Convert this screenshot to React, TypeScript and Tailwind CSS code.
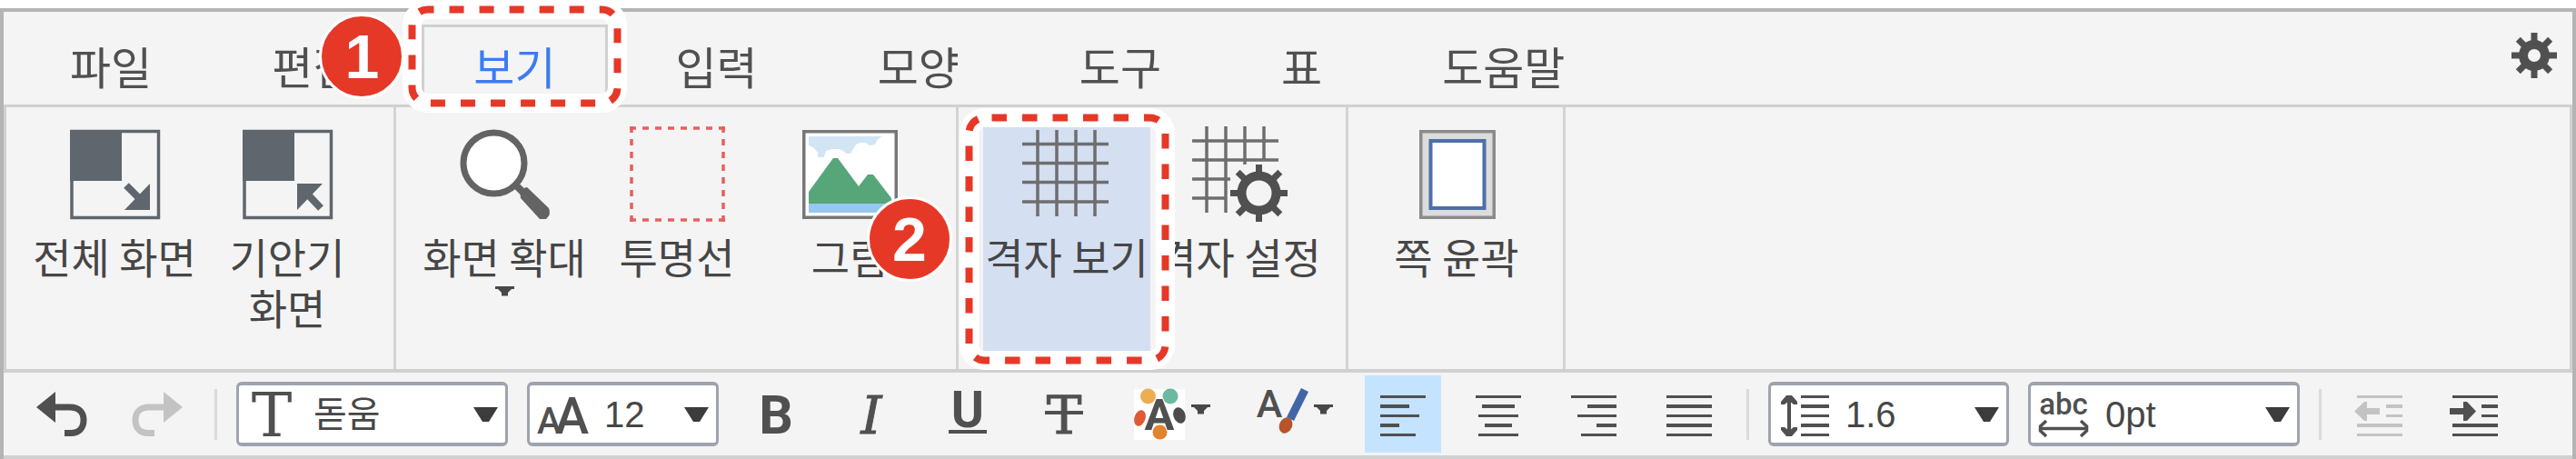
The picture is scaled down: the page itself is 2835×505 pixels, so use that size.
import type { ReactNode } from "react";

const INK = "#505050";

function Badge({ n, className }: { n: number; className: string }) {
  return (
    <span
      className={`pointer-events-none absolute z-30 flex size-[94px] items-center justify-center rounded-full border-[3px] border-white bg-[#e63827] font-['Liberation_Sans',sans-serif] text-[68px] leading-none font-bold text-white ${className}`}
    >
      {n}
    </span>
  );
}

function Callout({
  width,
  height,
  dash,
  offset,
  className,
}: {
  width: number;
  height: number;
  dash: string;
  offset: number;
  className: string;
}) {
  const box = { x: 10.5, y: 10.5, width: width - 21, height: height - 21, rx: 17, fill: "none" };
  return (
    <svg
      width={width}
      height={height}
      aria-hidden="true"
      className={`pointer-events-none absolute z-20 max-w-none ${className}`}
    >
      <rect {...box} stroke="#fff" strokeWidth="21" />
      <rect {...box} stroke="#e63827" strokeWidth="8" strokeDasharray={dash} strokeDashoffset={offset} />
    </svg>
  );
}

function Tab({ label, active, children }: { label: string; active?: boolean; children?: ReactNode }) {
  return (
    <div className="relative shrink-0">
      <button
        type="button"
        role="tab"
        aria-selected={!!active}
        className={`h-[88px] border-x-[3px] border-t-[3px] px-[54px] pb-[2px] text-[49px] leading-[56px] ${
          active ? "border-[#d0d0d0] text-[#3d7bf2]" : "border-transparent text-[#505050]"
        }`}
      >
        {label}
      </button>
      {children}
    </div>
  );
}

function Gear({ cx, cy, ring, thick, tip, diag }: { cx: number; cy: number; ring: number; thick: number; tip: number; diag: number }) {
  return (
    <g transform={`translate(${cx} ${cy})`} stroke={INK} fill="none">
      <circle r={ring} strokeWidth={thick} />
      {[0, 90, 180, 270].map((a) => (
        <g key={a} transform={`rotate(${a})`} strokeWidth="7">
          <path d={`M${ring} 0H${tip}`} />
          <path d={`M${ring} 0H${diag}`} transform="rotate(45)" />
        </g>
      ))}
    </g>
  );
}

function BigIcon({ children }: { children: ReactNode }) {
  return (
    <svg width="105" height="105" viewBox="0 0 105 105" aria-hidden="true" className="shrink-0">
      {children}
    </svg>
  );
}

function ScreenIcon({ inward }: { inward?: boolean }) {
  return (
    <BigIcon>
      <rect x="5" y="5.5" width="95.5" height="95" fill="none" stroke="#5f666d" strokeWidth="3.5" />
      <rect x="3" y="4" width="57" height="56" fill="#5f666d" />
      {inward ? (
        <>
          <path d="M63 63H91L63 92Z" fill="#5f666d" />
          <path d="M72 72L89 90" stroke="#5f666d" strokeWidth="8" />
        </>
      ) : (
        <>
          <path d="M91 63V92H63Z" fill="#5f666d" />
          <path d="M65 65L82 82" stroke="#5f666d" strokeWidth="8" />
        </>
      )}
    </BigIcon>
  );
}

function ZoomIcon() {
  return (
    <BigIcon>
      <path d="M62 62L78 78" stroke="#636363" strokeWidth="8" />
      <path d="M69 69L77 67L101 90Q104 97 98 102H91L70 79Z" fill="#636363" />
      <circle cx="40.5" cy="40.5" r="33.5" fill="#fff" stroke="#636363" strokeWidth="7" />
    </BigIcon>
  );
}

function GuideIcon() {
  return (
    <BigIcon>
      <path
        d="M0 2H105M0 103H105M2 0V105M103 0V105"
        stroke="#e85f5f"
        strokeWidth="3.5"
        strokeDasharray="7 7"
        fill="none"
      />
    </BigIcon>
  );
}

function PictureIcon() {
  return (
    <BigIcon>
      <rect x="1.75" y="5.75" width="101.5" height="94.5" fill="#fff" stroke="#777" strokeWidth="3.5" />
      <path
        d="M7 11H88L83 14L80 20L74 21L70 18H64L59 20L56 25L53 30H49L45 27L40 25H33L26 27L24 34H17V29L13 24L7 21Z"
        fill="#d2e5f5"
      />
      <path d="M7 72L34 35H39L62 66L72 53H78L98 79V86H7Z" fill="#57a679" />
      <rect x="7" y="85" width="91" height="10" fill="#97c7ee" />
    </BigIcon>
  );
}

function GridIcon() {
  return (
    <BigIcon>
      <path
        d="M3 19.5H98M3 40.5H98M3 61.5H98M3 83H98M20 4V99M41 4V99M62 4V99M83 4V99"
        stroke="#6e6e6e"
        strokeWidth="3.5"
      />
    </BigIcon>
  );
}

function GridSettingsIcon() {
  return (
    <BigIcon>
      <path
        d="M0 16H95M0 37H95M0 58H42M0 79H38M16 0V95M37 0V95M58 0V42M79 0V37"
        stroke="#6e6e6e"
        strokeWidth="3.5"
      />
      <Gear cx={73.5} cy={73.5} ring={19} thick={10} tip={31.5} diag={33} />
    </BigIcon>
  );
}

function PageOutlineIcon() {
  return (
    <BigIcon>
      <rect x="12.75" y="5.75" width="80.5" height="94.5" fill="#dcdcdc" stroke="#8b8b8b" strokeWidth="3.5" />
      <rect x="23.5" y="16" width="59" height="74" fill="#fff" stroke="#4d70aa" strokeWidth="4" />
    </BigIcon>
  );
}

function SmallCaret() {
  return (
    <svg width="21" height="11" viewBox="0 0 21 11" aria-hidden="true" className="shrink-0">
      <path d="M0 0H21V3H18L14 7V10.5H7V7L3 3H0Z" fill="#484848" />
    </svg>
  );
}

function RibbonGroup({ children }: { children: ReactNode }) {
  return <div className="flex shrink-0 border-r-[3px] border-[#d4d4d4] pr-[22px] pl-6">{children}</div>;
}

function RibbonItem({
  icon,
  label,
  pressed,
  caret,
  children,
}: {
  icon: ReactNode;
  label: string;
  pressed?: boolean;
  caret?: boolean;
  children?: ReactNode;
}) {
  return (
    <div className="relative flex w-[190px] shrink-0 px-[3px] pt-[15px] pb-[14px]">
      <button
        type="button"
        aria-pressed={pressed}
        className={`flex w-full flex-col items-center pt-[6px] ${pressed ? "bg-[#d5dff2]" : ""}`}
      >
        {icon}
        <span className="mt-[9px] text-[46px] leading-[56px] break-keep text-[#464646]">{label}</span>
        {caret && (
          <span className="mt-[6px]">
            <SmallCaret />
          </span>
        )}
      </button>
      {children}
    </div>
  );
}

function SmallIcon({ children }: { children: ReactNode }) {
  return (
    <svg width="56" height="56" viewBox="0 0 56 56" aria-hidden="true" className="shrink-0 overflow-visible">
      {children}
    </svg>
  );
}

function Tool({ label, pressed, disabled, children }: { label: string; pressed?: boolean; disabled?: boolean; children: ReactNode }) {
  return (
    <button
      type="button"
      aria-label={label}
      aria-pressed={pressed}
      disabled={disabled}
      className={`flex h-[85px] w-[84px] shrink-0 items-center justify-center ${pressed ? "bg-[#c4e3ff]" : ""}`}
    >
      <SmallIcon>{children}</SmallIcon>
    </button>
  );
}

function MenuTool({ label, children }: { label: string; children: ReactNode }) {
  return (
    <button
      type="button"
      aria-label={label}
      className="flex h-[85px] w-[114px] shrink-0 items-center gap-[7px] pl-4"
    >
      <SmallIcon>{children}</SmallIcon>
      <span className="pb-[11px]">
        <SmallCaret />
      </span>
    </button>
  );
}

function Divider() {
  return <span className="h-14 w-[3px] shrink-0 bg-[#dadada]" />;
}

function Picker({ label, value, width, children }: { label: string; value: string; width: string; children: ReactNode }) {
  return (
    <label
      className={`relative flex h-[71px] shrink-0 items-center rounded-[6px] border-x-[3px] border-y-4 border-[#9fa3ae] bg-white pl-2 ${width}`}
    >
      <SmallIcon>{children}</SmallIcon>
      <select
        aria-label={label}
        defaultValue={value}
        className="h-full min-w-0 flex-1 appearance-none bg-transparent pl-[18px] font-['Liberation_Sans','Noto_Sans_CJK_KR',sans-serif] text-[40px] leading-[60px] text-[#464646] outline-none"
      >
        <option>{value}</option>
      </select>
      <svg
        width="27"
        height="16"
        viewBox="0 0 27 16"
        aria-hidden="true"
        className="pointer-events-none absolute right-2 top-1/2 -translate-y-1/2"
      >
        <path d="M0 0H27L17 16H10Z" fill="#3c3c3c" />
      </svg>
    </label>
  );
}

const rowY = [7, 17, 28, 38, 49];
const rowH = [3, 4, 3, 4, 3];

function Rows({ widths, align }: { widths: number[]; align: "left" | "center" | "right" }) {
  return (
    <g fill={INK}>
      {widths.map((w, i) => (
        <rect
          key={i}
          x={align === "left" ? 3 : align === "right" ? 53 - w : 28 - w / 2}
          y={rowY[i]}
          width={w}
          height={rowH[i]}
        />
      ))}
    </g>
  );
}

function IndentRows({ color }: { color: string }) {
  return (
    <g fill={color}>
      {rowY.map((y, i) => {
        const short = i === 1 || i === 2;
        return <rect key={y} x={short ? 36 : 4} y={y} width={short ? 18 : 50} height={rowH[i]} />;
      })}
    </g>
  );
}

export default function App() {
  return (
    <div className="overflow-hidden bg-white pt-[9px] font-['Noto_Sans_CJK_KR',sans-serif]">
      <div className="border-x-4 border-t-4 border-[#b4b4b4] bg-[#f4f4f4]">
        <div className="flex items-start justify-between border-b-[3px] border-[#d0d0d0] pt-[14px] pr-[17px] pl-4">
          <div role="tablist" className="flex gap-[18px]">
            <Tab label="파일" />
            <Tab label="편집" />
            <Tab label="보기" active>
              <Callout width={247} height={124} dash="16 17.04" offset={9} className="-top-[27px] -left-[21px]" />
              <Badge n={1} className="-top-[12px] -left-[113px]" />
            </Tab>
            <Tab label="입력" />
            <Tab label="모양" />
            <Tab label="도구" />
            <Tab label="표" />
            <Tab label="도움말" />
          </div>
          <button type="button" aria-label="설정" className="mt-[9px] shrink-0">
            <svg width="50" height="50" viewBox="0 0 50 50" aria-hidden="true">
              <Gear cx={25} cy={25} ring={12} thick={10} tip={25} diag={25} />
            </svg>
          </button>
        </div>

        <div className="flex h-[292px] border-x-[3px] border-b-4 border-[#d0d0d0]">
          <RibbonGroup>
            <RibbonItem icon={<ScreenIcon />} label="전체 화면" />
            <RibbonItem icon={<ScreenIcon inward />} label="기안기 화면" />
          </RibbonGroup>
          <RibbonGroup>
            <RibbonItem icon={<ZoomIcon />} label="화면 확대" caret />
            <RibbonItem icon={<GuideIcon />} label="투명선" />
            <RibbonItem icon={<PictureIcon />} label="그림">
              <Badge n={2} className="top-[98px] left-[114px]" />
            </RibbonItem>
          </RibbonGroup>
          <RibbonGroup>
            <RibbonItem icon={<GridIcon />} label="격자 보기" pressed>
              <Callout width={237} height={288} dash="16.5 17" offset={25.5} className="top-px -left-[23px]" />
            </RibbonItem>
            <RibbonItem icon={<GridSettingsIcon />} label="격자 설정" />
          </RibbonGroup>
          <RibbonGroup>
            <RibbonItem icon={<PageOutlineIcon />} label="쪽 윤곽" />
          </RibbonGroup>
        </div>

        <div className="flex items-center gap-[21px] border-b-4 border-[#d0d0d0] py-[3px] pl-[22px]">
          <Tool label="실행 취소">
            <path d="M0 20L21 3V37Z" fill={INK} />
            <path d="M20 20H37C47 20 52 26 52 34C52 43 47 48.500 38 48.500H31" fill="none" stroke={INK} strokeWidth="7" />
          </Tool>
          <Tool label="다시 실행" disabled>
            <path d="M56 20L35 3V37Z" fill="#c3c3c3" />
            <path d="M36 20H19C9 20 4 26 4 34C4 43 9 48.500 18 48.500H25" fill="none" stroke="#c3c3c3" strokeWidth="7" />
          </Tool>
          <Divider />
          <Picker label="글꼴" value="돋움" width="w-[299px]">
            <text x="28" y="52" textAnchor="middle" fill={INK} fontFamily="DejaVu Serif" fontSize="67">T</text>
          </Picker>
          <Picker label="글자 크기" value="12" width="w-[211px]">
            <g fill={INK} fontFamily="Roboto" fontWeight="500">
              <text x="0" y="49" fontSize="40">A</text>
              <text x="20" y="49" fontSize="56">A</text>
            </g>
          </Picker>
          <Tool label="굵게">
            <text x="28" y="49" textAnchor="middle" fill={INK} fontFamily="Roboto" fontWeight="700" fontSize="59">B</text>
          </Tool>
          <Tool label="기울임">
            <text x="28" y="49" textAnchor="middle" fill={INK} stroke={INK} strokeWidth="1" fontFamily="DejaVu Serif" fontStyle="italic" fontSize="58">I</text>
          </Tool>
          <Tool label="밑줄">
            <text x="29" y="42" textAnchor="middle" fill={INK} fontFamily="Roboto" fontWeight="700" fontSize="55">U</text>
            <rect x="8" y="45" width="42" height="4" fill={INK} />
          </Tool>
          <Tool label="취소선">
            <text x="30" y="49" textAnchor="middle" fill={INK} stroke={INK} strokeWidth="1" fontFamily="DejaVu Serif" fontSize="58">T</text>
            <rect x="9" y="24" width="42" height="4" fill={INK} />
          </Tool>
          <MenuTool label="글자 색">
            <rect width="56" height="56" fill="#fff" />
            <circle cx="15.5" cy="8" r="8.500" fill="#ecae55" />
            <circle cx="40" cy="8" r="8.500" fill="#6bb9a0" />
            <ellipse cx="6.500" cy="32" rx="6" ry="9" fill="#df5a35" transform="rotate(20 6.5 32)" />
            <ellipse cx="50" cy="29" rx="6.500" ry="9" fill="#4c4c4c" transform="rotate(-20 50 29)" />
            <circle cx="28.500" cy="47.500" r="8" fill="#e2832f" />
            <text x="28" y="45" textAnchor="middle" fill={INK} stroke="#fff" strokeWidth="2" paintOrder="stroke" fontFamily="Roboto" fontWeight="700" fontSize="49">A</text>
          </MenuTool>
          <MenuTool label="글자 강조">
            <text x="14" y="31" textAnchor="middle" fill={INK} fontFamily="Roboto" fontWeight="500" fontSize="43">A</text>
            <path d="M53 1L37 33" stroke="#4166a8" strokeWidth="9" />
            <ellipse cx="32" cy="40" rx="7" ry="9" fill="#b9532b" transform="rotate(25 32 40)" />
          </MenuTool>
          <Tool label="왼쪽 정렬" pressed>
            <Rows widths={[50, 32, 43, 21, 39]} align="left" />
          </Tool>
          <Tool label="가운데 정렬">
            <Rows widths={[50, 36, 44, 30, 44]} align="center" />
          </Tool>
          <Tool label="오른쪽 정렬">
            <Rows widths={[50, 32, 43, 22, 39]} align="right" />
          </Tool>
          <Tool label="양쪽 정렬">
            <Rows widths={[50, 50, 50, 50, 50]} align="center" />
          </Tool>
          <Divider />
          <Picker label="줄 간격" value="1.6" width="w-[265px]">
            <path d="M12 9V50" stroke={INK} strokeWidth="4" />
            <path d="M3 17V14L9 7H15L21 14V17H17L12 13L7 17ZM3 42V45L9 52H15L21 45V42H17L12 46L7 42Z" fill={INK} />
            <g fill={INK}>
              {rowY.map((y, i) => (
                <rect key={y} x="25" y={y} width="31" height={rowH[i]} />
              ))}
            </g>
          </Picker>
          <Picker label="자간" value="0pt" width="w-[299px]">
            <text x="28" y="28" textAnchor="middle" fill={INK} fontFamily="Roboto" fontWeight="500" fontSize="33">abc</text>
            <path d="M2 43.500H54M9 35L2.500 41V46L9 52M47 35L53.500 41V46L47 52" fill="none" stroke={INK} strokeWidth="3.500" />
          </Picker>
          <Divider />
          <Tool label="내어쓰기" disabled>
            <IndentRows color="#c3c3c3" />
            <path d="M1 24.500L12 14H15V21H29V28H15V35H12Z" fill="#c3c3c3" />
          </Tool>
          <Tool label="들여쓰기">
            <IndentRows color={INK} />
            <path d="M30 24.500L20 14H16V21H1V28H16V35H20Z" fill={INK} />
          </Tool>
        </div>
      </div>
    </div>
  );
}
